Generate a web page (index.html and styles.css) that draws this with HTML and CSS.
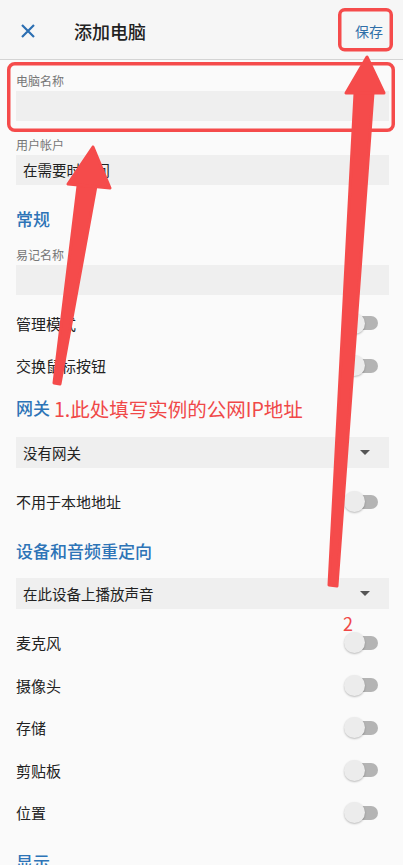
FILE: index.html
```html
<!DOCTYPE html>
<html lang="zh-CN">
<head>
  <meta charset="UTF-8" />
  <title>添加电脑</title>
  <link rel="stylesheet" href="styles.css">
</head>
<body>

  <header class="topbar">
    <button class="close-btn" aria-label="关闭">
      <svg width="16" height="16" viewBox="0 0 16 16">
        <path d="M2 2 L14 14 M14 2 L2 14" stroke="#2c6fb2" stroke-width="2.2" stroke-linecap="butt" fill="none"/>
      </svg>
    </button>
    <h1 class="title">添加电脑</h1>
    <button class="save-btn">保存</button>
  </header>

  <main class="form">
    <div class="field f-first">
      <div class="field-label">电脑名称</div>
      <div class="input"></div>
    </div>
    <div class="field">
      <div class="field-label">用户帐户</div>
      <div class="input">在需要时询问</div>
    </div>

    <h2 class="section s-first">常规</h2>
    <div class="field">
      <div class="field-label">易记名称</div>
      <div class="input"></div>
    </div>
    <div class="rows r-after-input">
      <div class="row"><span>管理模式</span><span class="switch"></span></div>
      <div class="row"><span>交换鼠标按钮</span><span class="switch"></span></div>
    </div>

    <h2 class="section s-tight">网关</h2>
    <div class="select sel-gateway">没有网关<span class="caret"></span></div>
    <div class="rows">
      <div class="row"><span>不用于本地地址</span><span class="switch"></span></div>
    </div>

    <h2 class="section">设备和音频重定向</h2>
    <div class="select">在此设备上播放声音<span class="caret"></span></div>
    <div class="rows">
      <div class="row"><span>麦克风</span><span class="switch"></span></div>
      <div class="row"><span>摄像头</span><span class="switch"></span></div>
      <div class="row"><span>存储</span><span class="switch"></span></div>
      <div class="row"><span>剪贴板</span><span class="switch"></span></div>
      <div class="row"><span>位置</span><span class="switch"></span></div>
    </div>

    <h2 class="section">显示</h2>
  </main>

  <!-- red annotations drawn over the screenshot -->
  <svg class="marks" width="403" height="865" viewBox="0 0 403 865">
    <g fill="none" stroke="#f54b4b" stroke-width="3.5">
      <rect x="339.75" y="9.75" width="51.5" height="40" rx="5"/>
      <rect x="8.75" y="63.75" width="384.5" height="66.5" rx="6"/>
    </g>
    <g fill="#f54b4b" stroke="#f54b4b" stroke-width="3" stroke-linejoin="round">
      <path d="M54 383 L60 384 L96 186 L78 186 Z"/>
      <path d="M93 147 L68 184 L110 188 Z"/>
      <path d="M329 585 L337 586 L373 93 L355 93 Z"/>
      <path d="M367 57 L346 93 L384 93 Z"/>
    </g>
  </svg>
  <div class="note note-1">1.此处填写实例的公网IP地址</div>
  <div class="note note-2">2</div>

</body>
</html>
```

FILE: styles.css
```css
* {
  box-sizing: border-box;
}
body {
  margin: 0;
  width: 403px;
  height: 865px;
  overflow: hidden;
  position: relative;
  background: #fafafa;
  font-family: "Noto Sans CJK SC", "Noto Sans", sans-serif;
  color: #222;
}
.topbar {
  height: 60px;
  display: flex;
  align-items: center;
  padding: 2px 20px 0 20px;
  background: #f6f6f6;
  border-bottom: 1px solid #d4d4d4;
}
.close-btn {
  border: 0;
  background: none;
  padding: 0;
  width: 16px;
  height: 16px;
  margin-right: 38px;
  display: flex;
}
.title {
  flex: 1;
  margin: 0;
  font-size: 18px;
  font-weight: 500;
  color: #222;
  line-height: 24px;
}
.save-btn {
  border: 0;
  background: none;
  padding: 0;
  font-family: inherit;
  font-size: 14px;
  color: #2f6ea8;
  line-height: 20px;
}
.form {
  padding: 0 14px 0 16px;
}
.field {
  margin-top: 14px;
}
.field.f-first {
  margin-top: 11px;
}
.field-label {
  font-size: 12px;
  line-height: 20px;
  color: #767676;
}
.input {
  height: 30px;
  background: #efefef;
  padding-left: 7px;
  font-size: 14.5px;
  line-height: 30px;
  color: #222;
}
.section {
  margin: 16px 0 0;
  font-size: 17px;
  line-height: 24px;
  font-weight: 500;
  color: #2d74b7;
}
.section.s-first {
  margin-top: 22px;
}
.section.s-tight {
  margin-top: 9px;
}
.select {
  margin-top: 15px;
  height: 31px;
  background: #efefef;
  padding: 0 19px 0 7px;
  display: flex;
  align-items: center;
  justify-content: space-between;
  font-size: 14.5px;
  color: #222;
}
.select.sel-gateway {
  margin-top: 17px;
}
.caret {
  width: 0;
  height: 0;
  border-left: 5px solid transparent;
  border-right: 5px solid transparent;
  border-top: 5px solid #555;
}
.rows {
  margin-top: 12.5px;
}
.rows.r-after-input {
  margin-top: 7px;
}
.row {
  height: 42.5px;
  display: flex;
  align-items: center;
  justify-content: space-between;
  padding-right: 11px;
  font-size: 15px;
}
.switch {
  position: relative;
  width: 33px;
  height: 14px;
  border-radius: 7px;
  background: #b4b4b4;
}
.switch::before {
  content: "";
  position: absolute;
  left: -1px;
  top: -3.5px;
  width: 21px;
  height: 21px;
  border-radius: 50%;
  background: #ececec;
  box-shadow: 0 1px 2px rgba(0,0,0,0.25);
}
.marks {
  position: absolute;
  left: 0;
  top: 0;
  pointer-events: none;
}
.note {
  position: absolute;
  color: #f04848;
  line-height: 24px;
  pointer-events: none;
}
.note-1 {
  left: 54px;
  top: 397px;
  font-size: 19.5px;
}
.note-2 {
  left: 343px;
  top: 611px;
  font-size: 18px;
}
```
